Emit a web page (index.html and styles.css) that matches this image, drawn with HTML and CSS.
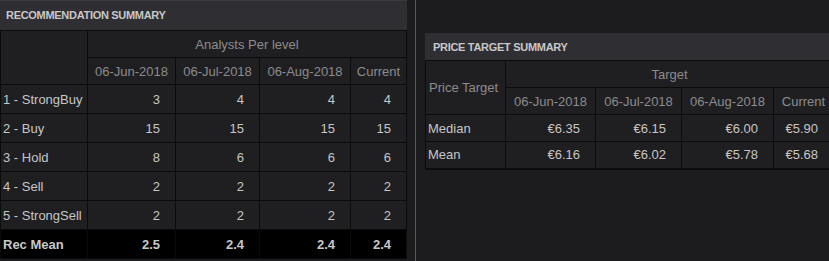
FILE: index.html
```html
<!DOCTYPE html>
<html>
<head>
<meta charset="utf-8">
<link rel="stylesheet" href="styles.css">
</head>
<body>
<div class="page">
  <section class="panel panel-left">
    <div class="panel-title">RECOMMENDATION SUMMARY</div>
    <table class="grid grid-left">
      <colgroup>
        <col style="width:87px"><col style="width:88px"><col style="width:84px"><col style="width:91px"><col style="width:56px">
      </colgroup>
      <thead>
        <tr class="hrow">
          <th rowspan="2" class="blank"></th>
          <th colspan="4">Analysts Per level</th>
        </tr>
        <tr class="hrow">
          <th>06-Jun-2018</th><th>06-Jul-2018</th><th>06-Aug-2018</th><th>Current</th>
        </tr>
      </thead>
      <tbody>
        <tr><td class="label">1 - StrongBuy</td><td>3</td><td>4</td><td>4</td><td>4</td></tr>
        <tr><td class="label">2 - Buy</td><td>15</td><td>15</td><td>15</td><td>15</td></tr>
        <tr><td class="label">3 - Hold</td><td>8</td><td>6</td><td>6</td><td>6</td></tr>
        <tr><td class="label">4 - Sell</td><td>2</td><td>2</td><td>2</td><td>2</td></tr>
        <tr><td class="label">5 - StrongSell</td><td>2</td><td>2</td><td>2</td><td>2</td></tr>
        <tr class="mean"><td class="label">Rec Mean</td><td>2.5</td><td>2.4</td><td>2.4</td><td>2.4</td></tr>
      </tbody>
    </table>
  </section>
  <div class="divider"></div>
  <section class="panel panel-right">
    <div class="panel-title">PRICE TARGET SUMMARY</div>
    <table class="grid grid-right">
      <colgroup>
        <col style="width:80px"><col style="width:90px"><col style="width:86px"><col style="width:92px"><col style="width:60px">
      </colgroup>
      <thead>
        <tr class="hrow">
          <th rowspan="2" class="rowhead">Price Target</th>
          <th colspan="4">Target</th>
        </tr>
        <tr class="hrow">
          <th>06-Jun-2018</th><th>06-Jul-2018</th><th>06-Aug-2018</th><th>Current</th>
        </tr>
      </thead>
      <tbody>
        <tr><td class="label">Median</td><td>€6.35</td><td>€6.15</td><td>€6.00</td><td>€5.90</td></tr>
        <tr><td class="label">Mean</td><td>€6.16</td><td>€6.02</td><td>€5.78</td><td>€5.68</td></tr>
      </tbody>
    </table>
  </section>
</div>
</body>
</html>
```

FILE: styles.css
```css
html, body {
  margin: 0;
  padding: 0;
  background: #1c1c1e;
  overflow: hidden;
}
body {
  width: 829px;
  height: 261px;
  font-family: "Liberation Sans", Arial, sans-serif;
  font-size: 13px;
  color: #c6c6c6;
}
.page {
  display: flex;
  align-items: flex-start;
  height: 261px;
}
.panel-left {
  width: 407px;
  flex: none;
}
.divider {
  flex: none;
  width: 1px;
  height: 261px;
  background: #58585a;
  margin: 0 9px 0 8px;
}
.panel-right {
  flex: none;
  width: 410px;
  margin-top: 33px;
}
.panel-title {
  background: #2e2e33;
  color: #c8c8c8;
  font-weight: bold;
  font-size: 11px;
  letter-spacing: -0.3px;
  display: flex;
  align-items: center;
}
.panel-left .panel-title {
  height: 30px;
  padding-left: 6px;
  box-shadow: inset 0 1px 0 #3a3a40;
}
.panel-right .panel-title {
  height: 27px;
  padding-left: 8px;
}
.grid {
  border-collapse: collapse;
  table-layout: fixed;
  background: #1f1f21;
}
.grid-left { width: 407px; }
.grid-right { width: 408px; }
.grid th, .grid td {
  border: 1px solid #0b0b0c;
  padding: 0;
  white-space: nowrap;
  overflow: hidden;
}
.grid th {
  font-weight: normal;
  color: #8c8c8e;
  text-align: center;
}
.grid td {
  text-align: right;
  padding-right: 15px;
}
.grid td.label {
  text-align: left;
  padding-left: 2px;
  padding-right: 0;
}
.grid th.rowhead {
  text-align: left;
  padding-left: 3px;
}
.grid-left .hrow { height: 27px; }
.grid-left tbody tr { height: 29px; }
.grid-right .hrow { height: 27px; }
.grid-right tbody tr { height: 27px; }
.grid-right tbody tr:last-child td { border-bottom: 2px solid #0b0b0c; }
.grid tr.mean td {
  background: #000;
  font-weight: bold;
  color: #c8c8c8;
}
```
